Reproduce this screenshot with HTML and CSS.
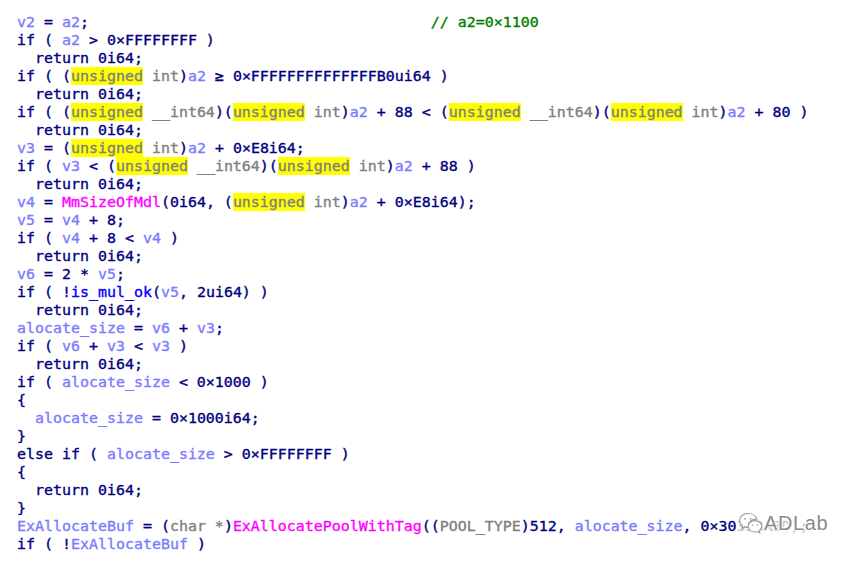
FILE: index.html
```html
<!DOCTYPE html>
<html>
<head>
<meta charset="utf-8">
<link rel="stylesheet" href="styles.css">
</head>
<body>
<div class="code">
<div class="ln"><span class="v">v2</span> = <span class="v">a2</span>;                                      <span class="c">// a2=0×1100</span></div>
<div class="ln">if ( <span class="v">a2</span> &gt; 0×FFFFFFFF )</div>
<div class="ln">  return 0i64;</div>
<div class="ln">if ( (<span class="h">unsigned</span><span class="t"> int</span>)<span class="v">a2</span> ≥ 0×FFFFFFFFFFFFFFB0ui64 )</div>
<div class="ln">  return 0i64;</div>
<div class="ln">if ( (<span class="h">unsigned</span><span class="t"> __int64</span>)(<span class="h">unsigned</span><span class="t"> int</span>)<span class="v">a2</span> + 88 &lt; (<span class="h">unsigned</span><span class="t"> __int64</span>)(<span class="h">unsigned</span><span class="t"> int</span>)<span class="v">a2</span> + 80 )</div>
<div class="ln">  return 0i64;</div>
<div class="ln"><span class="v">v3</span> = (<span class="h">unsigned</span><span class="t"> int</span>)<span class="v">a2</span> + 0×E8i64;</div>
<div class="ln">if ( <span class="v">v3</span> &lt; (<span class="h">unsigned</span><span class="t"> __int64</span>)(<span class="h">unsigned</span><span class="t"> int</span>)<span class="v">a2</span> + 88 )</div>
<div class="ln">  return 0i64;</div>
<div class="ln"><span class="v">v4</span> = <span class="f">MmSizeOfMdl</span>(0i64, (<span class="h">unsigned</span><span class="t"> int</span>)<span class="v">a2</span> + 0×E8i64);</div>
<div class="ln"><span class="v">v5</span> = <span class="v">v4</span> + 8;</div>
<div class="ln">if ( <span class="v">v4</span> + 8 &lt; <span class="v">v4</span> )</div>
<div class="ln">  return 0i64;</div>
<div class="ln"><span class="v">v6</span> = 2 * <span class="v">v5</span>;</div>
<div class="ln">if ( !<span class="b">is_mul_ok</span>(<span class="v">v5</span>, 2ui64) )</div>
<div class="ln">  return 0i64;</div>
<div class="ln"><span class="v">alocate_size</span> = <span class="v">v6</span> + <span class="v">v3</span>;</div>
<div class="ln">if ( <span class="v">v6</span> + <span class="v">v3</span> &lt; <span class="v">v3</span> )</div>
<div class="ln">  return 0i64;</div>
<div class="ln">if ( <span class="v">alocate_size</span> &lt; 0×1000 )</div>
<div class="ln">{</div>
<div class="ln">  <span class="v">alocate_size</span> = 0×1000i64;</div>
<div class="ln">}</div>
<div class="ln">else if ( <span class="v">alocate_size</span> &gt; 0×FFFFFFFF )</div>
<div class="ln">{</div>
<div class="ln">  return 0i64;</div>
<div class="ln">}</div>
<div class="ln"><span class="v">ExAllocateBuf</span> = (<span class="t">char *</span>)<span class="f">ExAllocatePoolWithTag</span>((<span class="t">POOL_TYPE</span>)512, <span class="v">alocate_size</span>, 0×30<span class="fade">333A3D);</span></div>
<div class="ln">if ( !<span class="v">ExAllocateBuf</span> )</div>
</div>
<div class="wm">
<svg class="wm-icon" width="26" height="24" viewBox="0 0 26 24">
<path d="M10 2.5c-4.7 0-8.5 3.1-8.5 7 0 2.2 1.2 4.1 3.1 5.4l-.8 2.6 3-1.6c1 .3 2.1.5 3.2.5.3 0 .5 0 .8 0-.2-.6-.3-1.2-.3-1.8 0-3.6 3.5-6.5 7.8-6.5.2 0 .4 0 .6 0-.8-3.2-4.4-5.6-8.9-5.6z" fill="#fff" stroke="#9a9a9a" stroke-width="1.1"/>
<path d="M17 9.6c-3.8 0-6.9 2.5-6.9 5.7s3.1 5.7 6.9 5.7c.8 0 1.6-.1 2.4-.4l2.4 1.3-.6-2.1c1.6-1.1 2.6-2.7 2.6-4.5 0-3.2-3.1-5.7-6.8-5.7z" fill="#fff" stroke="#9a9a9a" stroke-width="1.1"/>
<circle cx="7" cy="7.8" r=".9" fill="#9a9a9a"/><circle cx="12.6" cy="7.8" r=".9" fill="#9a9a9a"/>
<circle cx="14.6" cy="14" r=".8" fill="#9a9a9a"/><circle cx="19.4" cy="14" r=".8" fill="#9a9a9a"/>
</svg>
<span class="wm-text">ADLab</span>
</div>
</body>
</html>
```
FILE: styles.css
```css
html, body {
  margin: 0;
  padding: 0;
  background: #ffffff;
}
body {
  position: relative;
  width: 864px;
  height: 561px;
  overflow: hidden;
}
.code {
  padding: 13px 0 0 17px;
  font-family: "DejaVu Sans Mono", "Liberation Mono", monospace;
  font-size: 14.95px;
  line-height: 18px;
  color: #000080;
  -webkit-text-stroke: 0.35px currentColor;
}
.ln {
  white-space: pre;
  height: 18px;
}
.v { color: #7b7bff; }
.t { color: #808080; }
.h { color: #808080; background: #ffff00; }
.f { color: #ff00ff; }
.c { color: #008000; }
.b { color: #0000ff; }
.fade { color: #c8c8dc; }
.wm {
  position: absolute;
  left: 738px;
  top: 511px;
  display: flex;
  align-items: center;
}
.wm-icon {
  display: block;
}
.wm-text {
  font-family: "Liberation Sans", Arial, sans-serif;
  font-size: 20px;
  color: #8a8a8a;
  letter-spacing: 0.6px;
  text-shadow: 1px 0 #fff, -1px 0 #fff, 0 1px #fff, 0 -1px #fff;
}
```
